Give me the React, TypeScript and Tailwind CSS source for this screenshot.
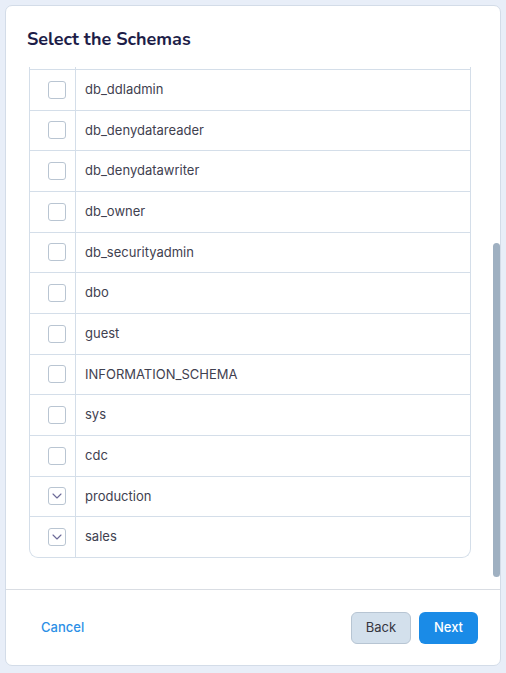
const schemas = [
  { name: "db_ddladmin", checked: false },
  { name: "db_denydatareader", checked: false },
  { name: "db_denydatawriter", checked: false },
  { name: "db_owner", checked: false },
  { name: "db_securityadmin", checked: false },
  { name: "dbo", checked: false },
  { name: "guest", checked: false },
  { name: "INFORMATION_SCHEMA", checked: false },
  { name: "sys", checked: false },
  { name: "cdc", checked: false },
  { name: "production", checked: true },
  { name: "sales", checked: true },
];

function Checkbox({ checked }: { checked: boolean }) {
  return (
    <span className="flex h-[18px] w-[18px] items-center justify-center rounded-[3px] border border-[#b9c5d2] bg-white">
      {checked && (
        <svg width="10" height="6" viewBox="0 0 10 6" fill="none">
          <path d="M1 1l4 4 4-4" stroke="#6c6a98" strokeWidth="1.1" strokeLinecap="round" strokeLinejoin="round" />
        </svg>
      )}
    </span>
  );
}

export default function App() {
  return (
    <div className="min-h-screen bg-[#e8eef8] p-[5px] font-['Inter',sans-serif]">
      <div className="flex h-[661px] w-[496px] flex-col rounded-[7px] border border-[#d3dce8] bg-white">
        <h1 className="px-[21px] pt-[19px] pb-[14px] font-['Nunito','Lato',sans-serif] text-[18px] font-bold leading-[28px] text-[#1d1d48]">
          Select the Schemas
        </h1>

        {/* list is scrolled to the bottom; only the visible rows are drawn */}
        <div className="relative flex-1 overflow-hidden pr-[29px] pl-[23px]">
          <div className="rounded-b-[9px] border-x border-b border-[#d4dee9]">
            <div className="flex h-[2px]">
              <div className="w-[46px] border-r border-[#d4dee9]" />
            </div>
            {schemas.map((s) => (
              <div key={s.name} className="flex h-[40.67px] border-t border-[#d4dee9]">
                <div className="flex w-[46px] shrink-0 items-center border-r border-[#d4dee9] pl-[18px]">
                  <Checkbox checked={s.checked} />
                </div>
                <div className="flex items-center px-[9px] text-[13px] text-[#3f4150]">{s.name}</div>
              </div>
            ))}
          </div>

          <div className="absolute top-[176px] right-0 h-[334px] w-[7px] rounded-full bg-[#9fb0c1]" />
        </div>

        <div className="flex items-center justify-between border-t border-[#d9dde3] px-[22px] pt-[22px] pb-[21px]">
          <button className="px-[13px] text-[13px] font-medium text-[#2b8fe6]">Cancel</button>
          <div className="flex gap-[8px]">
            <button className="h-[32px] w-[60px] rounded-[6px] border border-[#b7c5d3] bg-[#d3e0ec] text-[13px] text-[#35363f]">
              Back
            </button>
            <button className="h-[32px] w-[59px] rounded-[6px] bg-[#1a8be7] text-[13px] font-medium text-white">
              Next
            </button>
          </div>
        </div>
      </div>
    </div>
  );
}
